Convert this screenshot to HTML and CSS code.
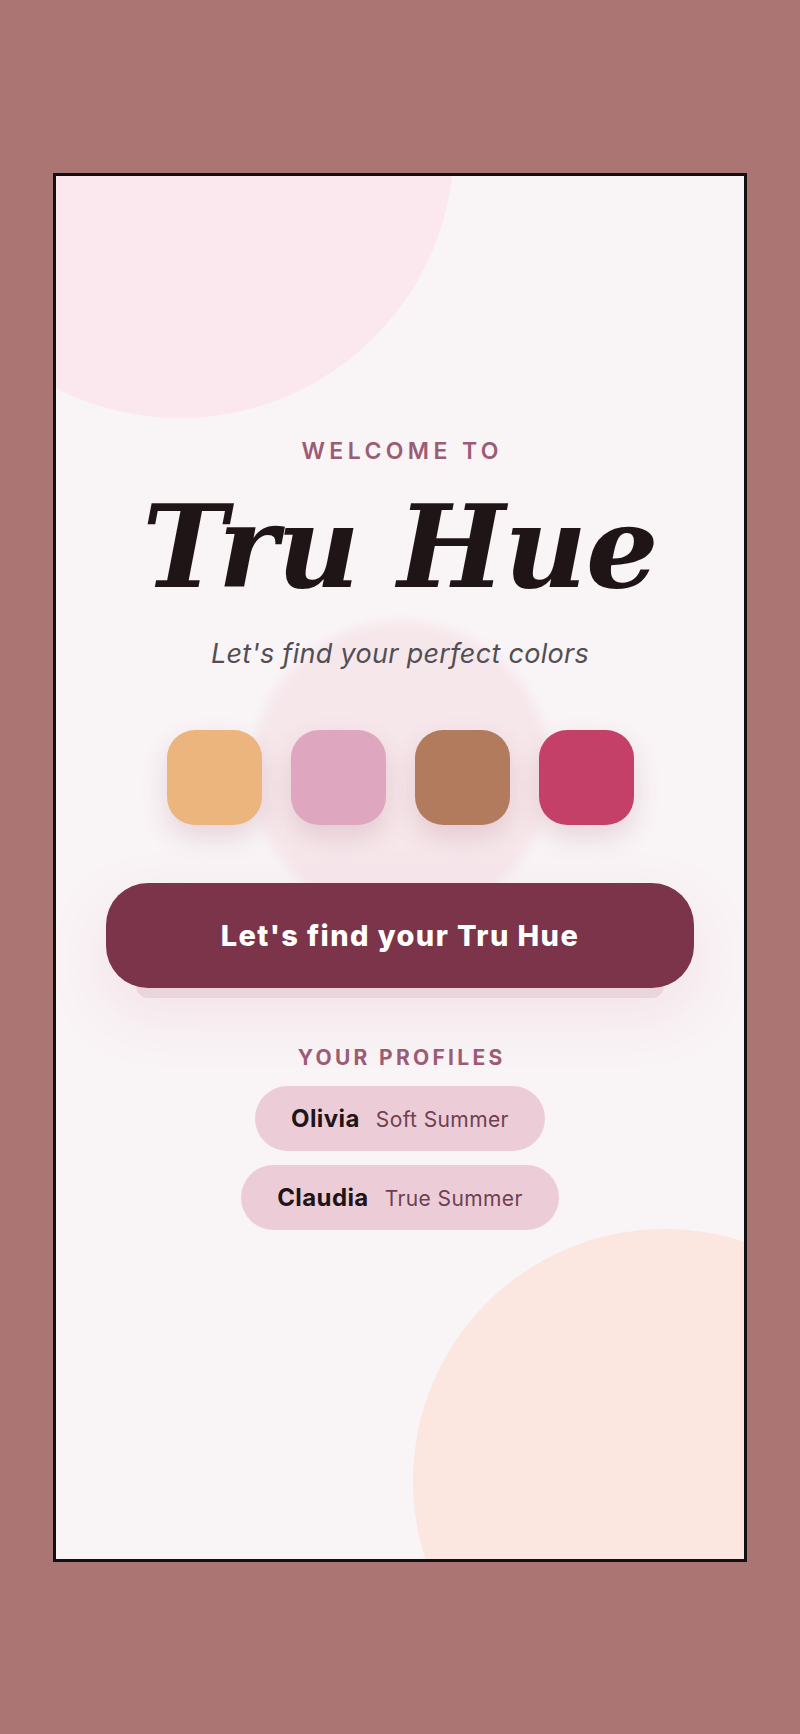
FILE: index.html
```html
<!DOCTYPE html>
<html lang="en">
<head>
<meta charset="utf-8">
<title>Tru Hue</title>
<link rel="stylesheet" href="styles.css">
</head>
<body>
<div class="page">
  <div class="frame">
    <div class="blob blob-top"></div>
    <div class="blob blob-mid"></div>
    <div class="blob blob-bottom"></div>
    <main class="content">
      <p class="eyebrow">WELCOME TO</p>
      <h1 class="title">Tru Hue</h1>
      <p class="subtitle">Let's find your perfect colors</p>
      <div class="swatches">
        <span class="swatch swatch-peach"></span>
        <span class="swatch swatch-pink"></span>
        <span class="swatch swatch-brown"></span>
        <span class="swatch swatch-rasp"></span>
      </div>
      <button class="cta">Let's find your Tru Hue</button>
      <p class="eyebrow profiles-label">YOUR PROFILES</p>
      <div class="profiles">
        <div class="profile"><span class="name">Olivia</span><span class="season">Soft Summer</span></div>
        <div class="profile"><span class="name">Claudia</span><span class="season">True Summer</span></div>
      </div>
    </main>
  </div>
</div>
</body>
</html>
```

FILE: styles.css
```css
* { box-sizing: border-box; }
html, body { margin: 0; padding: 0; }
body {
  background: #aa7573;
  width: 800px;
  height: 1734px;
  overflow: hidden;
  font-family: "Inter", "Noto Sans", sans-serif;
}
.page {
  padding: 173px 0 0 53px;
}
.frame {
  position: relative;
  width: 694px;
  height: 1389px;
  border: 3px solid #121012;
  background: #f9f4f6;
  overflow: hidden;
}
.blob {
  position: absolute;
  border-radius: 50%;
}
.blob-top {
  left: -150px;
  top: -306px;
  width: 548px;
  height: 548px;
  background: #fae8ee;
}
.blob-mid {
  left: 196px;
  top: 446px;
  width: 298px;
  height: 298px;
  background: #f6e7eb;
  filter: blur(4px);
}
.blob-bottom {
  left: 357px;
  top: 1053px;
  width: 504px;
  height: 504px;
  background: #fbe7e0;
}
.content {
  position: relative;
  z-index: 1;
  display: flex;
  flex-direction: column;
  align-items: center;
  padding-top: 264px;
}
.eyebrow {
  margin: 0;
  font-size: 23px;
  line-height: 1;
  font-weight: 600;
  letter-spacing: 4.4px;
  color: #9c5c74;
  padding-left: 4.4px;
}
.title {
  margin: 27px 0 0;
  font-family: "DejaVu Serif", "Liberation Serif", serif;
  font-style: italic;
  font-weight: 700;
  font-size: 114px;
  line-height: 1;
  color: #1f1517;
  letter-spacing: -1px;
}
.subtitle {
  margin: 36px 0 0;
  font-style: italic;
  font-size: 27px;
  font-weight: 400;
  line-height: 1;
  letter-spacing: 0.3px;
  color: #524e53;
}
.swatches {
  margin-top: 63px;
  display: flex;
  gap: 29px;
}
.swatch {
  width: 95px;
  height: 95px;
  border-radius: 28px;
  box-shadow: 0 12px 26px rgba(160, 90, 110, 0.2);
}
.swatch-peach { background: #ecb57d; }
.swatch-pink { background: #dea6bf; }
.swatch-brown { background: #b37b5e; }
.swatch-rasp { background: #c54068; }
.cta {
  margin-top: 58px;
  width: 588px;
  height: 105px;
  border: none;
  border-radius: 42px;
  background: #7b3449;
  color: #ffffff;
  font-family: "Inter", "Noto Sans", sans-serif;
  font-weight: 800;
  font-size: 29px;
  letter-spacing: 1.4px;
  box-shadow: 0 40px 0 -30px #e9d5db, 0 24px 60px rgba(220, 130, 160, 0.16);
}
.profiles-label {
  margin-top: 59px;
  font-size: 21px;
  font-weight: 700;
  letter-spacing: 3.3px;
  padding-left: 3.3px;
}
.profiles {
  margin-top: 18px;
  display: flex;
  flex-direction: column;
  align-items: center;
  gap: 14px;
}
.profile {
  display: flex;
  align-items: baseline;
  justify-content: center;
  gap: 16px;
  height: 65px;
  padding: 0 36px;
  border-radius: 33px;
  background: #eccdd7;
  line-height: 65px;
}
.name {
  font-size: 24px;
  font-weight: 700;
  letter-spacing: 0.4px;
  color: #1f1418;
}
.season {
  font-size: 21px;
  font-weight: 400;
  letter-spacing: 0.4px;
  color: #6e3f52;
}
```
